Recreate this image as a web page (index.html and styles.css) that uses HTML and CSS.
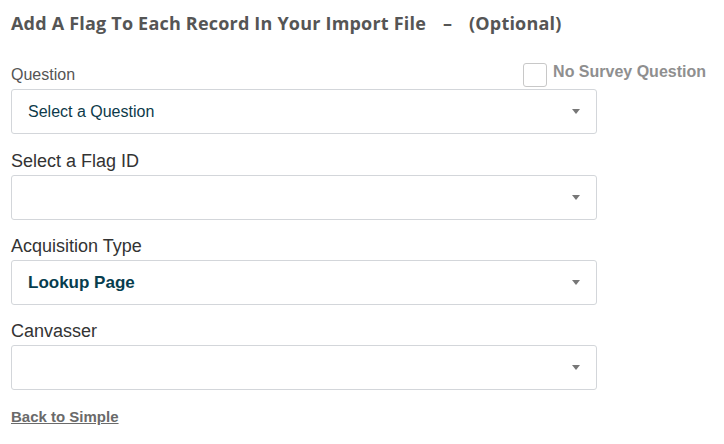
FILE: index.html
```html
<!DOCTYPE html>
<html>
<head>
<meta charset="utf-8">
<link rel="stylesheet" href="styles.css">
</head>
<body>
<div class="page">
  <h2 class="title">Add A Flag To Each Record In Your Import File <span class="dash">–</span> (Optional)</h2>

  <div class="field first">
    <div class="label-row">
      <label class="label small">Question</label>
      <label class="nosurvey"><span class="checkbox"></span><span class="nosurvey-text">No Survey Question</span></label>
    </div>
    <div class="select"><span class="value">Select a Question</span><span class="caret"></span></div>
  </div>

  <div class="field flag">
    <div class="label-row"><label class="label">Select a Flag ID</label></div>
    <div class="select"><span class="value"></span><span class="caret"></span></div>
  </div>

  <div class="field">
    <div class="label-row"><label class="label">Acquisition Type</label></div>
    <div class="select"><span class="value bold">Lookup Page</span><span class="caret"></span></div>
  </div>

  <div class="field">
    <div class="label-row"><label class="label">Canvasser</label></div>
    <div class="select"><span class="value"></span><span class="caret"></span></div>
  </div>

  <a class="back" href="#">Back to Simple</a>
</div>
</body>
</html>
```

FILE: styles.css
```css
html, body {
  margin: 0;
  padding: 0;
  background: #ffffff;
}
.page {
  width: 586px;
  padding: 11px 0 0 11px;
  font-family: "Liberation Sans", Arial, sans-serif;
}
.title {
  margin: 0 0 14px 0;
  font-family: "Open Sans", sans-serif;
  font-weight: 700;
  font-size: 18px;
  line-height: 24px;
  letter-spacing: 0.2px;
  color: #555555;
  white-space: nowrap;
}
.title .dash {
  margin: 0 12px;
}
.field {
  display: flex;
  flex-direction: column;
}
.field.flag {
  margin-top: 1px;
}
.label-row {
  display: flex;
  align-items: flex-end;
  justify-content: space-between;
  height: 40px;
}
.label {
  font-size: 18px;
  line-height: 20px;
  color: #333333;
  padding-bottom: 4px;
}
.label.small {
  font-size: 16px;
  color: #555555;
  padding-bottom: 4px;
}
.nosurvey {
  display: flex;
  align-items: flex-start;
  gap: 6px;
  margin-right: -109px;
  padding-bottom: 2px;
}
.checkbox {
  box-sizing: border-box;
  width: 24px;
  height: 24px;
  border: 1px solid #c8c8c8;
  border-radius: 3px;
  background: #fff;
}
.nosurvey-text {
  font-weight: 700;
  font-size: 16px;
  line-height: 18px;
  color: #8f8f8f;
}
.select {
  box-sizing: border-box;
  height: 45px;
  width: 586px;
  border: 1px solid #d3d6da;
  border-radius: 3px;
  display: flex;
  align-items: center;
  justify-content: space-between;
  padding: 0 16px 0 16px;
}
.value {
  font-size: 16px;
  color: #0d3a4a;
}
.value.bold {
  font-size: 17px;
  font-weight: 700;
  color: #073d4e;
}
.caret {
  width: 0;
  height: 0;
  border-left: 4.5px solid transparent;
  border-right: 4.5px solid transparent;
  border-top: 5px solid #777777;
}
.back {
  display: inline-block;
  margin-top: 18px;
  font-size: 15px;
  line-height: 17px;
  font-weight: 700;
  color: #6a6a6a;
  text-decoration: underline;
}
```
